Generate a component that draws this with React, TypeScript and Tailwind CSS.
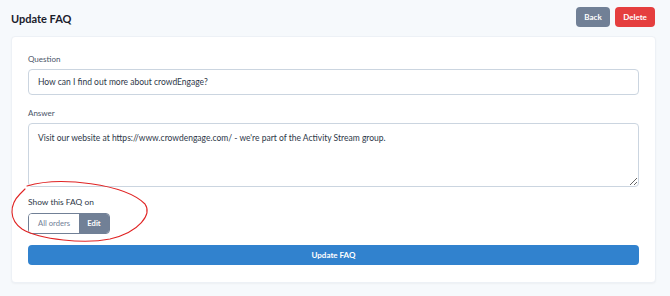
import { useState } from 'react'

const FONT = { fontFamily: 'Lato, "Open Sans", sans-serif' }

type Scope = 'all' | 'edit'

export default function App() {
  const [question, setQuestion] = useState('How can I find out more about crowdEngage?')
  const [answer, setAnswer] = useState(
    "Visit our website at https://www.crowdengage.com/ - we're part of the Activity Stream group."
  )
  const [scope, setScope] = useState<Scope>('edit')

  return (
    <div className="relative min-h-[296px] w-[670px] bg-[#f6f9fc] px-[11px] text-[#2d3748]" style={FONT}>
      {/* Header */}
      <div className="flex h-[36px] items-start justify-between">
        <h1 className="pt-[11px] text-[11px] font-bold leading-[15px] text-[#1a202c]">Update FAQ</h1>
        <div className="mr-[4px] flex gap-[5px] pt-[7px]">
          <button type="button" className="h-[20px] w-[34px] rounded-[4px] bg-[#718096] text-[8px] font-bold text-white">
            Back
          </button>
          <button type="button" className="h-[20px] w-[40px] rounded-[4px] bg-[#e53e3e] text-[8px] font-bold text-white">
            Delete
          </button>
        </div>
      </div>

      {/* Card */}
      <div className="mr-[3px] rounded-[4px] border border-[#edf1f6] bg-white px-[16px] pt-[17px] pb-[17px] shadow-[0_1px_2px_rgba(0,0,0,0.04)]">
        <label className="block text-[8px] leading-[10px] text-[#4a5568]">Question</label>
        <input
          value={question}
          onChange={(e) => setQuestion(e.target.value)}
          className="mt-[5px] block h-[26px] w-full rounded-[4px] border border-[#cbd5e0] px-[9px] text-[8.5px] text-[#2d3748] outline-none"
        />

        <label className="mt-[13px] block text-[8px] leading-[10px] text-[#4a5568]">Answer</label>
        <textarea
          value={answer}
          onChange={(e) => setAnswer(e.target.value)}
          className="mt-[5px] block h-[64px] w-full resize-y rounded-[4px] border border-[#cbd5e0] px-[9px] pt-[8px] text-[8.5px] leading-[12px] text-[#2d3748] outline-none"
        />

        <p className="mt-[9px] text-[8.4px] leading-[12px] text-[#2d3748]">Show this FAQ on</p>
        <div className="mt-[5px] flex h-[21px] w-[82px] overflow-hidden rounded-[4px] border border-[#718096]">
          <button
            type="button"
            onClick={() => setScope('all')}
            className={[
              'w-[50px] text-[7.6px]',
              scope === 'all' ? 'bg-[#718096] font-bold text-white' : 'bg-white text-[#718096]',
            ].join(' ')}
          >
            All orders
          </button>
          <button
            type="button"
            onClick={() => setScope('edit')}
            className={[
              'flex-1 text-[7.6px]',
              scope === 'edit' ? 'bg-[#718096] font-bold text-white' : 'bg-white text-[#718096]',
            ].join(' ')}
          >
            Edit
          </button>
        </div>

        <button
          type="button"
          className="mt-[11px] block h-[20px] w-full rounded-[4px] bg-[#3182ce] text-[8px] font-bold text-white"
        >
          Update FAQ
        </button>
      </div>

      {/* hand-drawn annotation */}
      <svg className="pointer-events-none absolute left-0 top-0" width="670" height="296" fill="none">
        <path
          d="M27 186 C 60 176, 125 184, 145 204 C 152 214, 140 232, 110 239 C 85 244, 40 240, 22 229 C 9 220, 9 205, 20 194 L 25 189"
          stroke="#e02424"
          strokeWidth="1.1"
          strokeLinecap="round"
        />
      </svg>
    </div>
  )
}
